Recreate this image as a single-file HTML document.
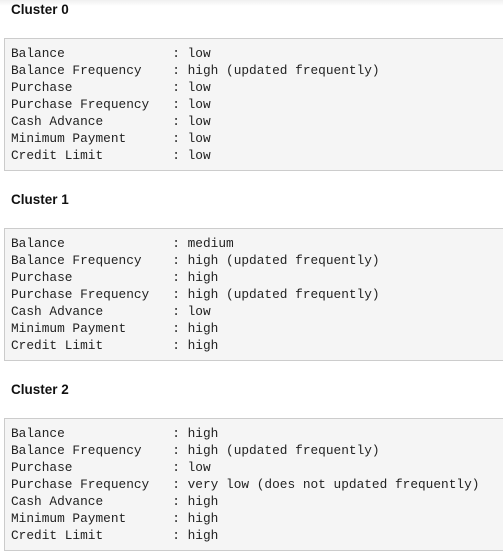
<!DOCTYPE html>
<html><head><style>
body{margin:0;background:#fff;width:503px;height:555px;overflow:hidden;position:relative;font-family:"Liberation Sans",sans-serif;}
.top{position:absolute;left:0;top:0;width:503px;height:6px;background:linear-gradient(#f0f0f0,#fff);}
h3{position:absolute;left:11px;margin:0;font-size:13.5px;font-weight:bold;color:#111;line-height:15px;}
pre{position:absolute;left:4px;width:520px;margin:0;box-sizing:border-box;border:1px solid #ccc;background:#f5f5f5;padding:6px 0 6px 6px;font-family:"Liberation Mono",monospace;font-size:12.8px;line-height:17px;color:#222;}
</style></head><body>
<div class="top"></div>
<h3 style="top:2px">Cluster 0</h3>
<pre style="top:38px;height:133px">Balance              : low
Balance Frequency    : high (updated frequently)
Purchase             : low
Purchase Frequency   : low
Cash Advance         : low
Minimum Payment      : low
Credit Limit         : low</pre>
<h3 style="top:192px">Cluster 1</h3>
<pre style="top:228px;height:133px">Balance              : medium
Balance Frequency    : high (updated frequently)
Purchase             : high
Purchase Frequency   : high (updated frequently)
Cash Advance         : low
Minimum Payment      : high
Credit Limit         : high</pre>
<h3 style="top:382px">Cluster 2</h3>
<pre style="top:418px;height:133px">Balance              : high
Balance Frequency    : high (updated frequently)
Purchase             : low
Purchase Frequency   : very low (does not updated frequently)
Cash Advance         : high
Minimum Payment      : high
Credit Limit         : high</pre>
</body></html>
